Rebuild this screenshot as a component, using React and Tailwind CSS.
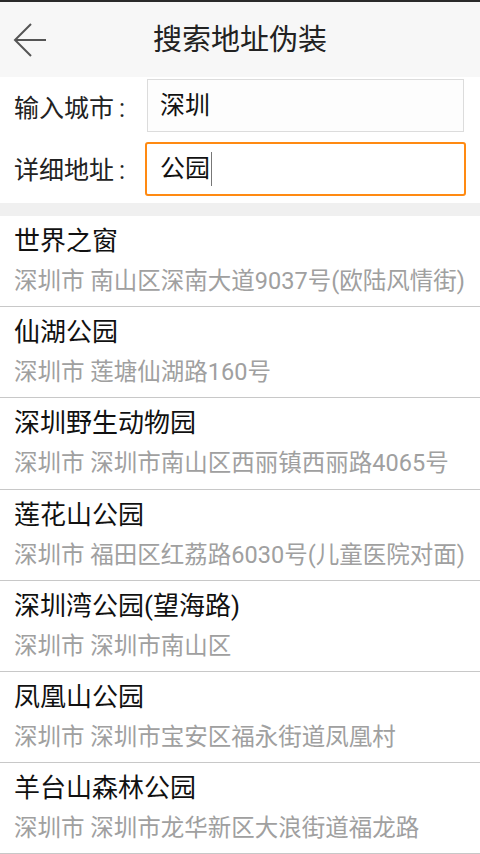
import React from "react";

const items = [
  ["世界之窗", "深圳市 南山区深南大道9037号(欧陆风情街)"],
  ["仙湖公园", "深圳市 莲塘仙湖路160号"],
  ["深圳野生动物园", "深圳市 深圳市南山区西丽镇西丽路4065号"],
  ["莲花山公园", "深圳市 福田区红荔路6030号(儿童医院对面)"],
  ["深圳湾公园(望海路)", "深圳市 深圳市南山区"],
  ["凤凰山公园", "深圳市 深圳市宝安区福永街道凤凰村"],
  ["羊台山森林公园", "深圳市 深圳市龙华新区大浪街道福龙路"],
];

const font = { fontFamily: '"Roboto", "Noto Sans CJK SC", sans-serif' };

export default function App() {
  return (
    <div className="w-[480px] h-[854px] overflow-hidden bg-white" style={font}>
      <div className="h-[2px] bg-[#2a2a2a]" />
      <div className="h-[75px] bg-[#f7f7f7] flex items-center relative">
        <svg className="absolute left-[13px] top-[20px]" width="34" height="36" viewBox="0 0 34 36" fill="none" stroke="#555" strokeWidth="2">
          <path d="M2 18 H33" />
          <path d="M18 2 L2 18 L18 34" />
        </svg>
        <div className="w-full text-center text-[29px] leading-[36px] text-[#222]">搜索地址伪装</div>
      </div>
      <div className="bg-white h-[126px] pt-[2px]">
        <div className="flex items-center h-[53px]">
          <div className="w-[147px] pl-[14px] text-[25px] text-[#222] leading-[30px] pt-[6px] whitespace-nowrap">
            输入城市<span className="ml-[5px]">:</span>
          </div>
          <div className="w-[317px] h-[53px] border border-[#dcdcdc] bg-[#fdfdfd] flex items-center pl-[12px] text-[25px] text-[#111] leading-[30px]">深圳</div>
        </div>
        <div className="flex items-center h-[54px] mt-[10px]">
          <div className="w-[145px] pl-[14px] text-[25px] text-[#222] leading-[30px] pt-[4px] whitespace-nowrap">
            详细地址<span className="ml-[5px]">:</span>
          </div>
          <div className="w-[321px] h-[54px] border-2 border-[#ff8a12] rounded-[3px] bg-white flex items-center pl-[13px] text-[25px] text-[#111] leading-[30px]">
            <span>公园</span>
            <span className="inline-block w-[1px] h-[34px] bg-[#777] ml-[1px]" />
          </div>
        </div>
      </div>
      <div className="h-[13px] bg-[#f0f0f0]" />
      <div>
        {items.map(([t, s], i) => (
          <div key={i} className="h-[91.2px] border-b border-[#c8c8c8] pl-[14px] pt-[9px]">
            <div className="text-[26px] leading-[32px] text-[#111]">{t}</div>
            <div className="text-[23.5px] leading-[30px] text-[#a0a0a0] mt-[9px] whitespace-nowrap">{s}</div>
          </div>
        ))}
      </div>
    </div>
  );
}
